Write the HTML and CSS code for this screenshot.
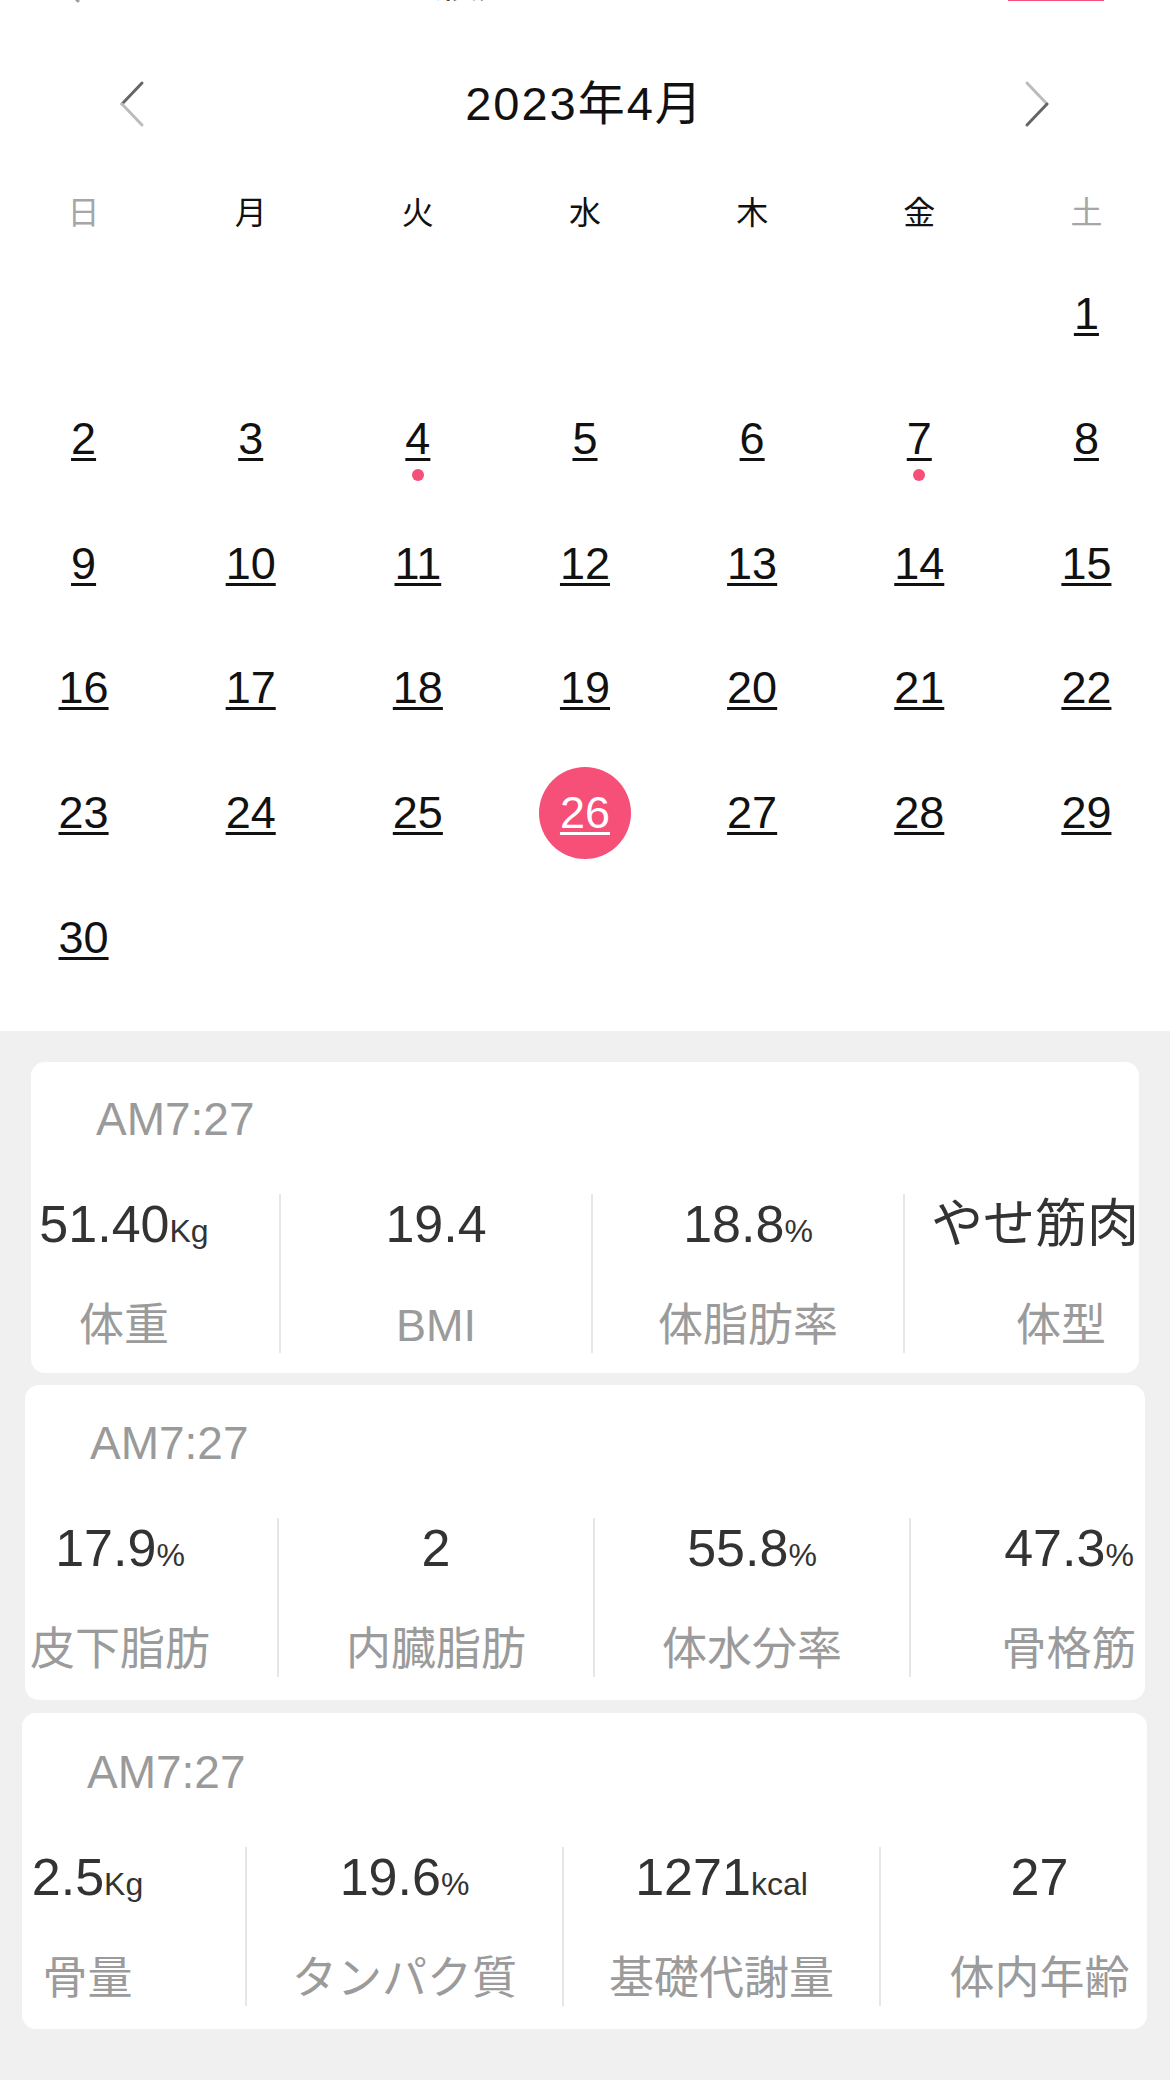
FILE: index.html
```html
<!DOCTYPE html>
<html lang="ja">
<head>
<meta charset="utf-8">
<title>2023年4月</title>
<link rel="stylesheet" href="styles.css">
</head>
<body>
<div class="calendar">
  <div class="topbar">
    <span class="tb-back"><svg width="24" height="46" viewBox="0 0 24 46"><path d="M22 2 L3 23 L22 44" fill="none" stroke="#9a9a9a" stroke-width="3" stroke-linecap="round"/></svg></span>
    <span class="tb-title">履歴データ</span>
    <span class="tb-action">編集</span>
  </div>
  <div class="month-nav">
    <svg class="chev" width="26" height="48" viewBox="0 0 26 48"><line x1="23" y1="3" x2="3" y2="24" stroke="#666" stroke-width="3" stroke-linecap="round"/><line x1="3" y1="24" x2="23" y2="45" stroke="#bcbcbc" stroke-width="3" stroke-linecap="round"/></svg>
    <div class="month-title">2023年4月</div>
    <svg class="chev" width="26" height="48" viewBox="0 0 26 48"><line x1="3" y1="3" x2="23" y2="24" stroke="#bcbcbc" stroke-width="3" stroke-linecap="round"/><line x1="23" y1="24" x2="3" y2="45" stroke="#666" stroke-width="3" stroke-linecap="round"/></svg>
  </div>
  <div class="weekdays">
    <span class="wk weekend">日</span><span class="wk">月</span><span class="wk">火</span><span class="wk">水</span><span class="wk">木</span><span class="wk">金</span><span class="wk weekend">土</span>
  </div>
  <div class="days">
    <div class="day"></div><div class="day"></div><div class="day"></div><div class="day"></div><div class="day"></div><div class="day"></div>
    <div class="day"><span class="num">1</span></div>
    <div class="day"><span class="num">2</span></div>
    <div class="day"><span class="num">3</span></div>
    <div class="day"><span class="num">4</span><span class="dot"></span></div>
    <div class="day"><span class="num">5</span></div>
    <div class="day"><span class="num">6</span></div>
    <div class="day"><span class="num">7</span><span class="dot"></span></div>
    <div class="day"><span class="num">8</span></div>
    <div class="day"><span class="num">9</span></div>
    <div class="day"><span class="num">10</span></div>
    <div class="day"><span class="num">11</span></div>
    <div class="day"><span class="num">12</span></div>
    <div class="day"><span class="num">13</span></div>
    <div class="day"><span class="num">14</span></div>
    <div class="day"><span class="num">15</span></div>
    <div class="day"><span class="num">16</span></div>
    <div class="day"><span class="num">17</span></div>
    <div class="day"><span class="num">18</span></div>
    <div class="day"><span class="num">19</span></div>
    <div class="day"><span class="num">20</span></div>
    <div class="day"><span class="num">21</span></div>
    <div class="day"><span class="num">22</span></div>
    <div class="day"><span class="num">23</span></div>
    <div class="day"><span class="num">24</span></div>
    <div class="day"><span class="num">25</span></div>
    <div class="day selected"><span class="sel-circle"><span class="num">26</span></span></div>
    <div class="day"><span class="num">27</span></div>
    <div class="day"><span class="num">28</span></div>
    <div class="day"><span class="num">29</span></div>
    <div class="day"><span class="num">30</span></div>
  </div>
</div>

<div class="records">
  <section class="card card-a">
    <div class="time">AM7:27</div>
    <div class="track">
      <div class="col"><div class="value">51.40<span class="unit">Kg</span></div><div class="label">体重</div></div>
      <div class="col"><div class="value">19.4</div><div class="label">BMI</div></div>
      <div class="col"><div class="value">18.8<span class="unit">%</span></div><div class="label">体脂肪率</div></div>
      <div class="col"><div class="value">やせ筋肉型</div><div class="label">体型</div></div>
    </div>
  </section>
  <section class="card card-b">
    <div class="time">AM7:27</div>
    <div class="track">
      <div class="col"><div class="value">17.9<span class="unit">%</span></div><div class="label">皮下脂肪</div></div>
      <div class="col"><div class="value">2</div><div class="label">内臓脂肪</div></div>
      <div class="col"><div class="value">55.8<span class="unit">%</span></div><div class="label">体水分率</div></div>
      <div class="col"><div class="value">47.3<span class="unit">%</span></div><div class="label">骨格筋</div></div>
    </div>
  </section>
  <section class="card card-c">
    <div class="time">AM7:27</div>
    <div class="track">
      <div class="col"><div class="value">2.5<span class="unit">Kg</span></div><div class="label">骨量</div></div>
      <div class="col"><div class="value">19.6<span class="unit">%</span></div><div class="label">タンパク質</div></div>
      <div class="col"><div class="value">1271<span class="unit">kcal</span></div><div class="label">基礎代謝量</div></div>
      <div class="col"><div class="value">27</div><div class="label">体内年齢</div></div>
    </div>
  </section>
</div>
</body>
</html>
```

FILE: styles.css
```css
html, body {
  margin: 0;
  padding: 0;
}
body {
  width: 1170px;
  min-height: 2080px;
  background: #f0f0f0;
  font-family: "Liberation Sans", "Noto Sans CJK JP", sans-serif;
  color: #111;
}

.calendar {
  background: #fff;
  padding-bottom: 31px;
}

/* cut-off top bar: only the bottom edge of its content peeks in */
.topbar {
  height: 6px;
  overflow: hidden;
  display: flex;
  align-items: flex-end;
  padding: 0 66px 0 56px;
}
.tb-back {
  line-height: 0;
  margin-bottom: 3px;
}
.tb-title {
  flex: 1;
  text-align: center;
  font-size: 44px;
  line-height: 1;
  color: #111;
  margin-bottom: 2px;
}
.tb-action {
  font-size: 48px;
  line-height: 1;
  color: #f64f78;
  text-decoration: underline;
  text-decoration-thickness: 3px;
  margin-bottom: 2px;
}

.month-nav {
  margin-top: 52px;
  height: 92px;
  display: flex;
  align-items: center;
  justify-content: space-between;
  padding: 0 120px 0 119px;
}
.chev {
  display: block;
}
.month-title {
  font-size: 47px;
  line-height: 60px;
  letter-spacing: 2px;
  color: #111;
}

.weekdays {
  margin-top: 38px;
  height: 50px;
  display: grid;
  grid-template-columns: repeat(7, 1fr);
  align-items: center;
}
.wk {
  text-align: center;
  font-size: 32px;
  line-height: 50px;
  color: #111;
}
.wk.weekend {
  color: #a6a6a6;
}

.days {
  margin-top: 14px;
  display: grid;
  grid-template-columns: repeat(7, 1fr);
  grid-auto-rows: 124.7px;
}
.day {
  position: relative;
  display: flex;
  align-items: center;
  justify-content: center;
}
.num {
  font-size: 45px;
  line-height: 60px;
  color: #111;
  text-decoration: underline;
  text-decoration-thickness: 3px;
  text-underline-offset: 4px;
}
.dot {
  position: absolute;
  left: 50%;
  top: calc(50% + 30px);
  width: 12px;
  height: 12px;
  margin-left: -6px;
  border-radius: 50%;
  background: #f64f78;
}
.sel-circle {
  width: 92px;
  height: 92px;
  border-radius: 50%;
  background: #f64f78;
  display: flex;
  align-items: center;
  justify-content: center;
}
.selected .num {
  color: #fff;
}

.records {
  padding-top: 31px;
}
.card {
  background: #fff;
  border-radius: 14px;
  overflow: hidden;
  box-sizing: border-box;
}
.card-a {
  margin: 0 31px;
  height: 311px;
  padding-top: 27px;
  --shift: -62px;
  --col: 312px;
}
.card-b {
  margin: 12px 25px 0;
  height: 315px;
  padding-top: 28px;
  --shift: -62px;
  --col: 316px;
}
.card-c {
  margin: 13px 23px 0 22px;
  height: 316px;
  padding-top: 29px;
  --shift: -92px;
  --col: 317px;
}
.time {
  padding-left: 65px;
  font-size: 46px;
  line-height: 60px;
  color: #9a9a9a;
}
.track {
  display: flex;
  margin-top: 45px;
  margin-left: var(--shift);
}
.col {
  flex: none;
  width: var(--col);
  height: 159px;
  box-sizing: border-box;
  text-align: center;
  border-right: 2px solid #e6e6e6;
}
.col:last-child {
  border-right: none;
}
.value {
  height: 60px;
  font-size: 52px;
  line-height: 60px;
  color: #333;
  white-space: nowrap;
}
.unit {
  font-size: 32px;
  line-height: 1;
}
.label {
  margin-top: 45px;
  font-size: 45px;
  line-height: 54px;
  color: #9b9b9b;
  white-space: nowrap;
}
```
